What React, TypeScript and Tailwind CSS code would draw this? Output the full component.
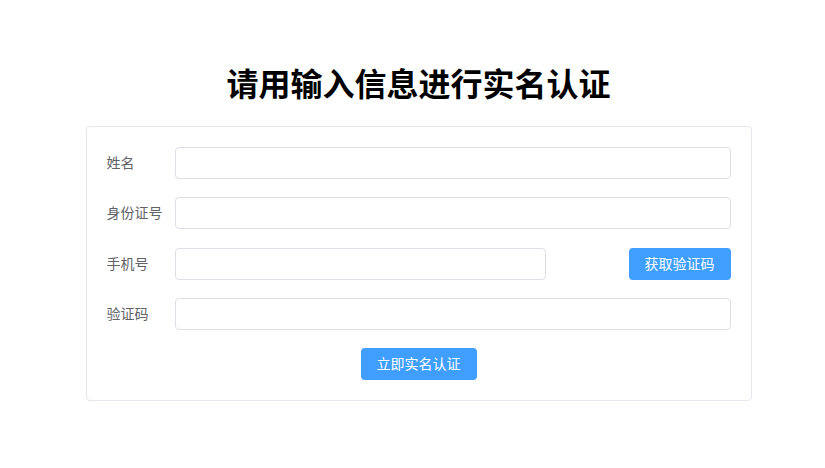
import React, { useState } from "react";

const font = { fontFamily: '"Liberation Sans", "Noto Sans CJK SC", sans-serif' };

const Field: React.FC<{ label: string; gap?: string; children: React.ReactNode }> = ({
  label,
  gap = "mb-[18px]",
  children,
}) => (
  <div className={"flex items-center h-[32px] " + gap}>
    <label className="w-[68px] shrink-0 text-[14px] text-[#606266]">{label}</label>
    <div className="flex-1 flex items-center">{children}</div>
  </div>
);

const inputCls =
  "w-full h-[32px] px-[15px] text-[14px] text-[#606266] border border-[#dcdfe6] rounded-[4px] outline-none focus:border-[#409eff]";

const App: React.FC = () => {
  const [name, setName] = useState("");
  const [idCard, setIdCard] = useState("");
  const [phone, setPhone] = useState("");
  const [code, setCode] = useState("");

  return (
    <div className="min-h-screen bg-white pl-[12px] pt-[65px]" style={font}>
      <h1 className="text-center text-[32px] leading-[40px] font-bold text-black mb-[21px]">
        请用输入信息进行实名认证
      </h1>
      <div className="mx-auto w-[666px] border border-[#e4e7ed] rounded-[4px] px-[20px] pt-[20px] pb-[20px] bg-white">
        <Field label="姓名">
          <input className={inputCls} value={name} onChange={(e) => setName(e.target.value)} />
        </Field>
        <Field label="身份证号" gap="mb-[19px]">
          <input className={inputCls} value={idCard} onChange={(e) => setIdCard(e.target.value)} />
        </Field>
        <Field label="手机号">
          <div className="w-[371px]">
            <input className={inputCls} value={phone} onChange={(e) => setPhone(e.target.value)} />
          </div>
          <div className="flex-1 flex justify-end">
            <button className="h-[32px] w-[102px] rounded-[4px] bg-[#409eff] text-white text-[14px]">
              获取验证码
            </button>
          </div>
        </Field>
        <Field label="验证码">
          <input className={inputCls} value={code} onChange={(e) => setCode(e.target.value)} />
        </Field>
        <div className="flex justify-center">
          <button className="h-[32px] w-[116px] rounded-[4px] bg-[#409eff] text-white text-[14px]">
            立即实名认证
          </button>
        </div>
      </div>
    </div>
  );
};

export default App;
